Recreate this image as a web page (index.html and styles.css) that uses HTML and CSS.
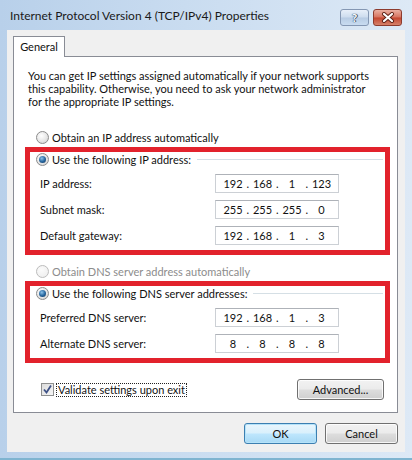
FILE: index.html
```html
<!DOCTYPE html>
<html lang="en">
<head>
    <meta charset="UTF-8">
    <meta name="viewport" content="width=device-width, initial-scale=1.0">
    <title>Internet Protocol Version 4 (TCP/IPv4) Properties</title>
    <link rel="stylesheet" href="styles.css">
</head>
<body>
    <div class="window">
        <div class="titlebar">
            <span class="title">Internet Protocol Version 4 (TCP/IPv4) Properties</span>
            <div class="caption-buttons">
                <span class="cap-btn help">?</span>
                <span class="cap-btn close">
                    <svg width="14" height="11" viewBox="0 0 14 11">
                        <path d="M3 2 L11 9 M11 2 L3 9" stroke="#5a1f14" stroke-width="4" stroke-linecap="round"/>
                        <path d="M3 2 L11 9 M11 2 L3 9" stroke="#fff" stroke-width="2.2" stroke-linecap="round"/>
                    </svg>
                </span>
            </div>
        </div>

        <div class="client">
            <div class="tabs">
                <div class="tab">General</div>
            </div>

            <div class="panel">
                <p class="intro">
                    You can get IP settings assigned automatically if your network supports<br>
                    this capability. Otherwise, you need to ask your network administrator<br>
                    for the appropriate IP settings.
                </p>

                <div class="option-row">
                    <span class="radio"></span>
                    <span>Obtain an IP address automatically</span>
                </div>

                <div class="highlight">
                    <div class="group-head">
                        <span class="radio checked"></span>
                        <span>Use the following IP address:</span>
                        <span class="group-line"></span>
                    </div>
                    <div class="field-row">
                        <span class="field-label">IP address:</span>
                        <div class="ip-box">
                            <span class="octet">192</span><span class="dot">.</span><span class="octet">168</span><span class="dot">.</span><span class="octet">1</span><span class="dot">.</span><span class="octet">123</span>
                        </div>
                    </div>
                    <div class="field-row">
                        <span class="field-label">Subnet mask:</span>
                        <div class="ip-box">
                            <span class="octet">255</span><span class="dot">.</span><span class="octet">255</span><span class="dot">.</span><span class="octet">255</span><span class="dot">.</span><span class="octet">0</span>
                        </div>
                    </div>
                    <div class="field-row">
                        <span class="field-label">Default gateway:</span>
                        <div class="ip-box">
                            <span class="octet">192</span><span class="dot">.</span><span class="octet">168</span><span class="dot">.</span><span class="octet">1</span><span class="dot">.</span><span class="octet">3</span>
                        </div>
                    </div>
                </div>

                <div class="option-row disabled">
                    <span class="radio"></span>
                    <span>Obtain DNS server address automatically</span>
                </div>

                <div class="highlight">
                    <div class="group-head">
                        <span class="radio checked"></span>
                        <span>Use the following DNS server addresses:</span>
                        <span class="group-line"></span>
                    </div>
                    <div class="field-row">
                        <span class="field-label">Preferred DNS server:</span>
                        <div class="ip-box">
                            <span class="octet">192</span><span class="dot">.</span><span class="octet">168</span><span class="dot">.</span><span class="octet">1</span><span class="dot">.</span><span class="octet">3</span>
                        </div>
                    </div>
                    <div class="field-row">
                        <span class="field-label">Alternate DNS server:</span>
                        <div class="ip-box">
                            <span class="octet">8</span><span class="dot">.</span><span class="octet">8</span><span class="dot">.</span><span class="octet">8</span><span class="dot">.</span><span class="octet">8</span>
                        </div>
                    </div>
                </div>

                <div class="panel-footer">
                    <span class="checkbox">
                        <svg width="11" height="11" viewBox="0 0 11 11">
                            <path d="M2 5.5 L4.5 8.5 L9 1.5" fill="none" stroke="#3d5186" stroke-width="1.8"/>
                        </svg>
                    </span>
                    <span class="focus-label">Validate settings upon exit</span>
                    <button class="btn advanced">Advanced...</button>
                </div>
            </div>

            <div class="dialog-buttons">
                <button class="btn default">OK</button>
                <button class="btn">Cancel</button>
            </div>
        </div>
    </div>
</body>
</html>
```

FILE: styles.css
```css
* {
    box-sizing: border-box;
    margin: 0;
    padding: 0;
}

body {
    font-family: Lato, 'Open Sans', sans-serif;
    font-size: 11px;
    color: #111;
    background-color: #fff;
}

.window {
    width: 412px;
    height: 460px;
    background: linear-gradient(90deg, #b8d0ea 0%, #c9dcf0 45%, #dde9f6 100%);
    border-bottom: 2px solid #7fb4d0;
}

.titlebar {
    height: 30px;
    display: flex;
    align-items: flex-start;
    justify-content: space-between;
    padding: 8px 10px 0 10px;
}

.title {
    font-size: 12px;
    line-height: 16px;
    color: #1a1a1a;
}

.caption-buttons {
    display: flex;
    gap: 4px;
    margin-top: 1px;
}

.cap-btn {
    width: 29px;
    height: 17px;
    border-radius: 3px;
    display: flex;
    align-items: center;
    justify-content: center;
}

.help {
    border: 1px solid #8497b3;
    background: linear-gradient(#e7eff9 0%, #cddcee 48%, #b7cbe3 52%, #c9dcf1 100%);
    color: #fff;
    font-weight: bold;
    font-size: 12px;
    text-shadow: 0 0 1px #2d3e57, 0 0 1px #2d3e57, 1px 0 0 #4a5d78;
}

.close {
    border: 1px solid #8d3b2e;
    background: linear-gradient(#eab0a2 0%, #d7735f 48%, #c4452f 52%, #d6826a 100%);
}

.client {
    margin: 0 7px 0 7px;
    height: 422px;
    background-color: #f0f0f0;
    padding: 6px 7px 0 6px;
}

.tabs {
    display: flex;
}

.tab {
    width: 52px;
    height: 21px;
    background-color: #fff;
    border: 1px solid #898c95;
    border-bottom: none;
    margin-bottom: -1px;
    position: relative;
    z-index: 1;
    text-align: center;
    line-height: 19px;
}

.panel {
    height: 357px;
    background-color: #fff;
    border: 1px solid #898c95;
    padding: 12px 13px 0 14px;
}

.intro {
    line-height: 13px;
    white-space: nowrap;
}

.option-row {
    display: flex;
    align-items: center;
    gap: 3px;
    height: 14px;
    margin: 22px 0 0 8px;
}

.option-row.disabled {
    color: #8c8c8c;
    margin-top: 9px;
}

.radio {
    width: 13px;
    height: 13px;
    border-radius: 50%;
    border: 1px solid #8b8b8b;
    background: radial-gradient(circle at 40% 35%, #ffffff 0%, #e6e6e6 55%, #c9c9c9 100%);
    position: relative;
    flex-shrink: 0;
}

.disabled .radio {
    border-color: #bcbcbc;
    background: radial-gradient(circle at 40% 35%, #fbfbfb 0%, #ececec 100%);
}

.radio.checked::after {
    content: '';
    position: absolute;
    top: 2px;
    left: 2px;
    width: 7px;
    height: 7px;
    border-radius: 50%;
    background: radial-gradient(circle at 40% 35%, #8cc2ea 0%, #2a6aa2 50%, #0d2f55 100%);
}

.highlight {
    width: 365px;
    margin: 3px 0 0 -3px;
    border: 5px solid #e2222c;
    padding: 0 2px 5px 6px;
}

.group-head {
    display: flex;
    align-items: center;
    gap: 3px;
    height: 14px;
}

.group-line {
    flex: 1;
    height: 1px;
    margin-left: 3px;
    background-color: #d5dfe5;
}

.field-row {
    display: flex;
    align-items: center;
    height: 19px;
    margin-top: 7px;
}

.group-head + .field-row {
    margin-top: 8px;
}

.field-label {
    width: 179px;
    padding-left: 4px;
}

.ip-box {
    width: 124px;
    height: 19px;
    border: 1px solid #ccd0d5;
    border-top-color: #aeb2b8;
    background-color: #fff;
    display: flex;
    align-items: center;
    padding-left: 6px;
}

.octet {
    width: 22px;
    text-align: center;
}

.dot {
    width: 7.5px;
    text-align: center;
}

.panel-footer {
    display: flex;
    align-items: center;
    margin-top: 16px;
    height: 21px;
}

.checkbox {
    width: 13px;
    height: 13px;
    margin-left: 13px;
    border: 1px solid #8e8f8f;
    background: linear-gradient(135deg, #dcdcdc, #f6f6f6);
    display: flex;
    align-items: center;
    justify-content: center;
}

.focus-label {
    margin-left: 2px;
    padding: 0 1px;
    border: 1px dotted #222;
    line-height: 12px;
}

.btn {
    font-family: inherit;
    font-size: 11px;
    color: #111;
    height: 21px;
    border: 1px solid #707070;
    border-radius: 3px;
    background: linear-gradient(#f2f2f2 0%, #ebebeb 48%, #dddddd 52%, #cfcfcf 100%);
    box-shadow: inset 0 0 0 1px rgba(255, 255, 255, 0.8);
}

.advanced {
    width: 87px;
    margin-left: auto;
}

.dialog-buttons {
    display: flex;
    justify-content: flex-end;
    gap: 8px;
    margin-top: 10px;
}

.dialog-buttons .btn {
    width: 73px;
}

.btn.default {
    border-color: #3c7fb1;
    background: linear-gradient(#eaf6fd 0%, #d9f0fc 48%, #bee6fd 52%, #a7d9f5 100%);
    box-shadow: inset 0 0 0 1px #b6e3f9;
}
```
